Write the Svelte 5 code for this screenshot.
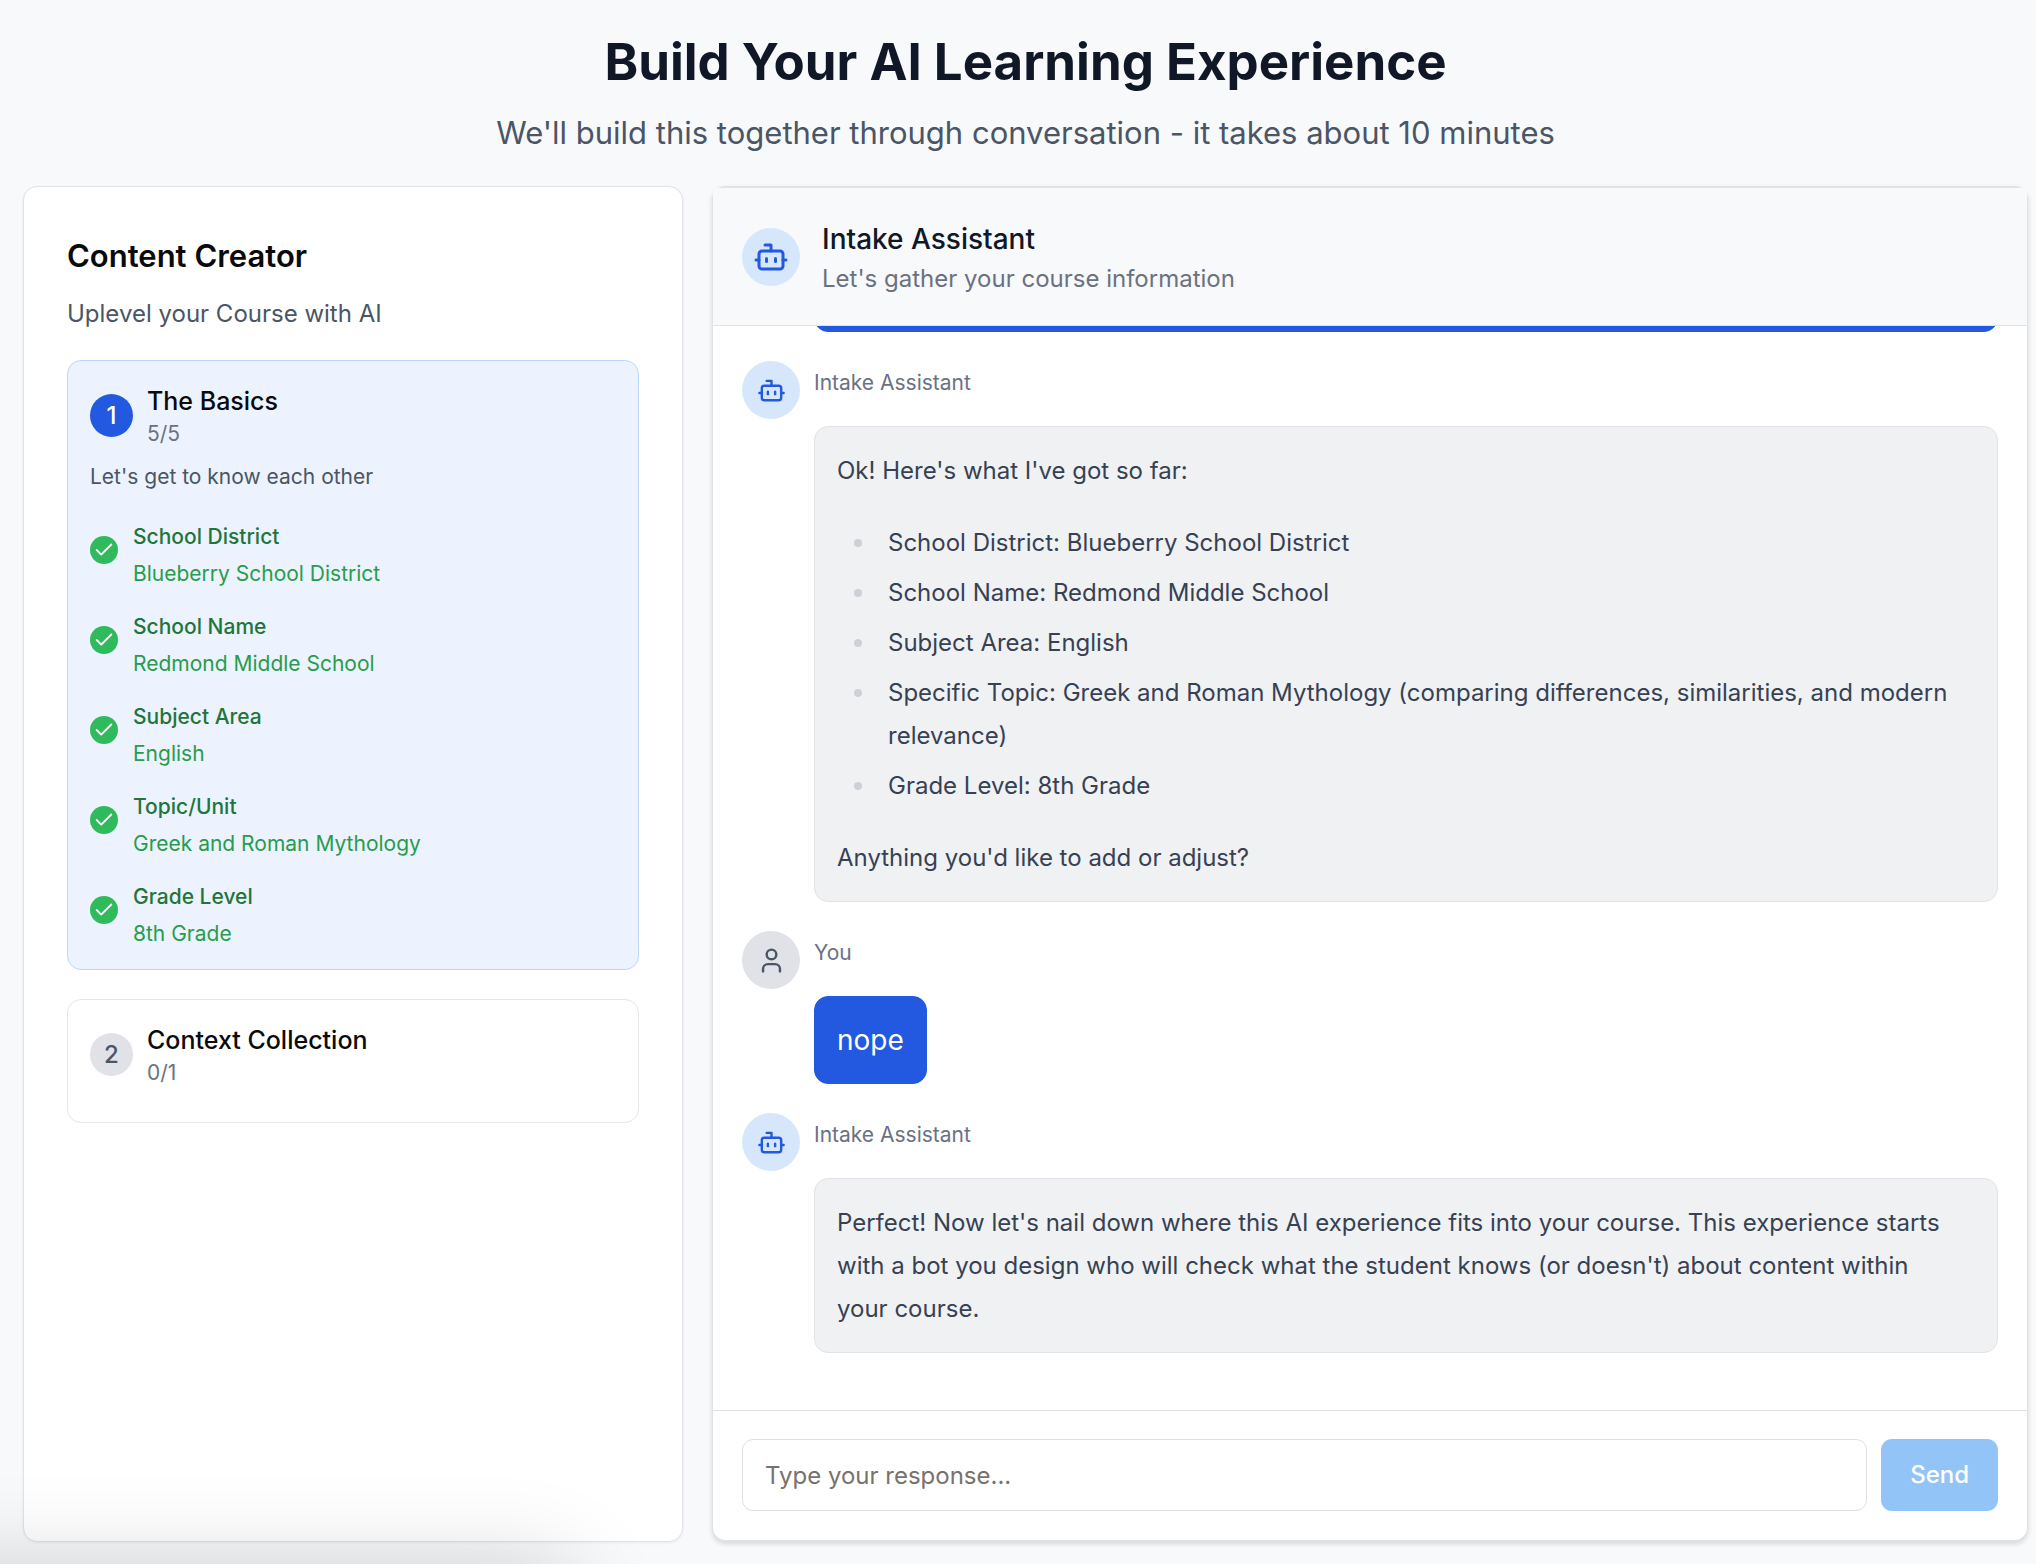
<script>
  const basics = [
    { label: 'School District', value: 'Blueberry School District' },
    { label: 'School Name', value: 'Redmond Middle School' },
    { label: 'Subject Area', value: 'English' },
    { label: 'Topic/Unit', value: 'Greek and Roman Mythology' },
    { label: 'Grade Level', value: '8th Grade' }
  ];

  const summary = [
    'School District: Blueberry School District',
    'School Name: Redmond Middle School',
    'Subject Area: English',
    'Specific Topic: Greek and Roman Mythology (comparing differences, similarities, and modern relevance)',
    'Grade Level: 8th Grade'
  ];

  let draft = $state('');
</script>

{#snippet bot()}
  <svg class="icon" viewBox="0 0 24 24" aria-hidden="true">
    <path d="M12 8V4H8" />
    <rect width="16" height="12" x="4" y="8" rx="2" />
    <path d="M2 14h2" />
    <path d="M20 14h2" />
    <path d="M15 13v2" />
    <path d="M9 13v2" />
  </svg>
{/snippet}

<div class="page">
  <header class="intro">
    <h1>Build Your AI Learning Experience</h1>
    <p>We'll build this together through conversation - it takes about 10 minutes</p>
  </header>

  <div class="columns">
    <aside class="panel outline">
      <h2>Content Creator</h2>
      <p class="tagline">Uplevel your Course with AI</p>

      <section class="step active">
        <div class="step-head">
          <span class="number">1</span>
          <div>
            <h3>The Basics</h3>
            <p class="count">5/5</p>
          </div>
        </div>
        <p class="about">Let's get to know each other</p>
        <ul class="fields">
          {#each basics as field}
            <li>
              <span class="tick">
                <svg viewBox="0 0 24 24" aria-hidden="true"><path d="M20 6 9 17l-5-5" /></svg>
              </span>
              <div>
                <p class="label">{field.label}</p>
                <p class="value">{field.value}</p>
              </div>
            </li>
          {/each}
        </ul>
      </section>

      <section class="step">
        <div class="step-head">
          <span class="number">2</span>
          <div>
            <h3>Context Collection</h3>
            <p class="count">0/1</p>
          </div>
        </div>
      </section>
    </aside>

    <main class="panel chat">
      <header class="chat-head">
        <span class="avatar large">{@render bot()}</span>
        <div>
          <h2>Intake Assistant</h2>
          <p>Let's gather your course information</p>
        </div>
      </header>

      <div class="messages">
        <div class="message">
          <div class="bubble mine"></div>
        </div>

        <article class="message">
          <span class="avatar">{@render bot()}</span>
          <p class="name">Intake Assistant</p>
          <div class="bubble">
            <p>Ok! Here's what I've got so far:</p>
            <ul>
              {#each summary as line}
                <li>{line}</li>
              {/each}
            </ul>
            <p>Anything you'd like to add or adjust?</p>
          </div>
        </article>

        <article class="message">
          <span class="avatar person">
            <svg class="icon" viewBox="0 0 24 24" aria-hidden="true">
              <path d="M19 21v-2a4 4 0 0 0-4-4H9a4 4 0 0 0-4 4v2" />
              <circle cx="12" cy="7" r="4" />
            </svg>
          </span>
          <p class="name">You</p>
          <div class="bubble mine short">nope</div>
        </article>

        <article class="message">
          <span class="avatar">{@render bot()}</span>
          <p class="name">Intake Assistant</p>
          <div class="bubble">
            <p>
              Perfect! Now let's nail down where this AI experience fits into your course. This experience
              starts with a bot you design who will check what the student knows (or doesn't) about content
              within your&nbsp;course.
            </p>
          </div>
        </article>
      </div>

      <form class="composer" onsubmit={(e) => e.preventDefault()}>
        <input type="text" aria-label="Your response" placeholder="Type your response..." bind:value={draft} />
        <button type="submit">Send</button>
      </form>
    </main>
  </div>
  <div class="corner-shade" aria-hidden="true"></div>
</div>

<style>
  :global(body) {
    background: #f8f9fb;
  }

  .page {
    box-sizing: border-box;
    display: flex;
    flex-direction: column;
    height: 100vh;
    padding: 29px 8px 22px 23px;
    overflow: hidden;
    position: relative;
    font-family: Inter, 'Liberation Sans', sans-serif;
    font-size: 24px;
    line-height: 36px;
    color: #0a0a0a;
  }

  h1, h2, h3, p, ul {
    margin: 0;
    padding: 0;
  }

  ul {
    list-style: none;
  }

  .intro {
    text-align: center;
    margin-bottom: 28px;
  }

  .intro h1 {
    font-size: 51px;
    line-height: 65px;
    font-weight: 700;
    color: #101828;
    margin-bottom: 14px;
  }

  .intro p {
    font-size: 31px;
    line-height: 50px;
    color: #4a5565;
  }

  .columns {
    flex: 1;
    min-height: 0;
    display: grid;
    grid-template-columns: minmax(0, 330fr) minmax(0, 658fr);
    gap: 29px;
  }

  .panel {
    box-sizing: border-box;
    min-height: 0;
    background: #fff;
    border: 1px solid #e1e2e8;
    border-radius: 14px;
  }

  .outline {
    padding: 44px 43px 43px;
    box-shadow: 0 1px 3px rgba(0, 0, 0, 0.06);
  }

  .outline h2 {
    font-size: 31px;
    line-height: 50px;
    font-weight: 600;
    margin-bottom: 15px;
  }

  .tagline {
    color: #4a5565;
    margin-bottom: 28px;
  }

  .step {
    border: 1px solid #e5e6ea;
    border-radius: 14px;
    padding: 22px 22px 21px;
  }

  .step.active {
    background: #ecf3fe;
    border-color: #bbd8fb;
    margin-bottom: 29px;
  }

  .step-head {
    display: flex;
    align-items: center;
    gap: 14px;
    margin-bottom: 14px;
  }

  .number {
    display: grid;
    place-items: center;
    width: 43px;
    height: 43px;
    border-radius: 50%;
    background: #e1e2e8;
    color: #4a5565;
    font-weight: 500;
  }

  .active .number {
    background: #2259e0;
    color: #fff;
  }

  h3 {
    font-size: 25px;
    line-height: 36px;
    font-weight: 500;
  }

  .count {
    font-size: 21px;
    line-height: 29px;
    color: #6a7282;
  }

  .about {
    font-size: 21px;
    line-height: 29px;
    color: #4a5565;
    margin-bottom: 31px;
  }

  .fields {
    display: grid;
    gap: 24px;
    font-size: 21px;
    line-height: 29px;
  }

  .fields li {
    display: flex;
    align-items: flex-start;
    gap: 15px;
  }

  .tick {
    display: grid;
    place-items: center;
    width: 28px;
    height: 28px;
    margin-top: 14px;
    border-radius: 50%;
    background: #2fbb5b;
  }

  .tick svg {
    width: 22px;
    height: 22px;
    fill: none;
    stroke: #fff;
    stroke-width: 2;
    stroke-linecap: round;
    stroke-linejoin: round;
  }

  .label {
    font-weight: 500;
    color: #1f753b;
    margin-bottom: 8px;
  }

  .value {
    color: #279c4c;
  }

  .chat {
    display: flex;
    flex-direction: column;
    border-top-width: 2px;
    border-bottom-width: 2px;
    box-shadow: 0 2px 5px rgba(0, 0, 0, 0.14);
  }

  .chat-head {
    display: flex;
    align-items: center;
    gap: 22px;
    padding: 29px 29px 28px;
    background: #f8f9fb;
    border-bottom: 1px solid #e1e2e8;
  }

  .chat-head h2 {
    font-size: 28px;
    line-height: 44px;
    font-weight: 500;
    color: #101828;
  }

  .chat-head p {
    color: #6a7282;
  }

  .avatar {
    grid-row: 1 / 3;
    display: grid;
    place-items: center;
    width: 58px;
    height: 58px;
    border-radius: 50%;
    background: #d6e7fc;
    color: #2259e0;
  }

  .avatar.person {
    background: #e1e2e8;
    color: #4a5565;
  }

  .icon {
    width: 29px;
    height: 29px;
    fill: none;
    stroke: currentColor;
    stroke-width: 2;
    stroke-linecap: round;
    stroke-linejoin: round;
  }

  .large .icon {
    width: 36px;
    height: 36px;
  }

  .messages {
    flex: 1;
    min-height: 0;
    overflow: hidden;
    display: flex;
    flex-direction: column;
    justify-content: flex-end;
    gap: 29px;
    padding: 0 29px 57px;
  }

  .message {
    flex: none;
    display: grid;
    grid-template-columns: 58px minmax(0, 1fr);
    column-gap: 14px;
    align-items: start;
  }

  .name {
    font-size: 21px;
    line-height: 43px;
    color: #6a7282;
    margin-bottom: 22px;
  }

  .bubble {
    grid-column: 2;
    border: 1px solid #e1e3e7;
    border-radius: 14px;
    padding: 22px;
    background: #f0f1f3;
    color: #364153;
    line-height: 43px;
  }

  .bubble.mine {
    background: #2259e0;
    border-color: #2259e0;
    color: #fff;
    font-size: 28px;
    line-height: 42px;
  }

  .bubble.short {
    justify-self: start;
  }

  .bubble ul {
    display: grid;
    gap: 7px;
    margin: 29px 0;
  }

  .bubble li {
    display: flex;
    padding-left: 17px;
    gap: 26px;
  }

  .bubble li::before {
    content: '';
    flex: none;
    width: 8px;
    height: 8px;
    margin-top: 18px;
    border-radius: 50%;
    background: #cdd0d6;
  }

  .composer {
    display: flex;
    gap: 14px;
    padding: 28px 29px 29px;
    border-top: 1px solid #e1e2e8;
  }

  .composer input,
  .composer button {
    box-sizing: border-box;
    height: 72px;
    border-radius: 11px;
    font: inherit;
  }

  .composer input {
    flex: 1;
    min-width: 0;
    padding: 0 22px;
    border: 1px solid #dfe0e4;
    background: #fff;
    color: #364153;
  }

  .composer input::placeholder {
    color: #78716c;
    opacity: 1;
  }

  .composer button {
    padding: 0 29px;
    border: 0;
    background: #93c4f7;
    color: #fff;
    font-weight: 500;
  }

  .corner-shade {
    position: absolute;
    left: -100px;
    top: 100%;
    width: 670px;
    height: 200px;
    border-radius: 20px;
    box-shadow: 0 0 90px rgba(0, 0, 0, 0.17);
    pointer-events: none;
  }
</style>
